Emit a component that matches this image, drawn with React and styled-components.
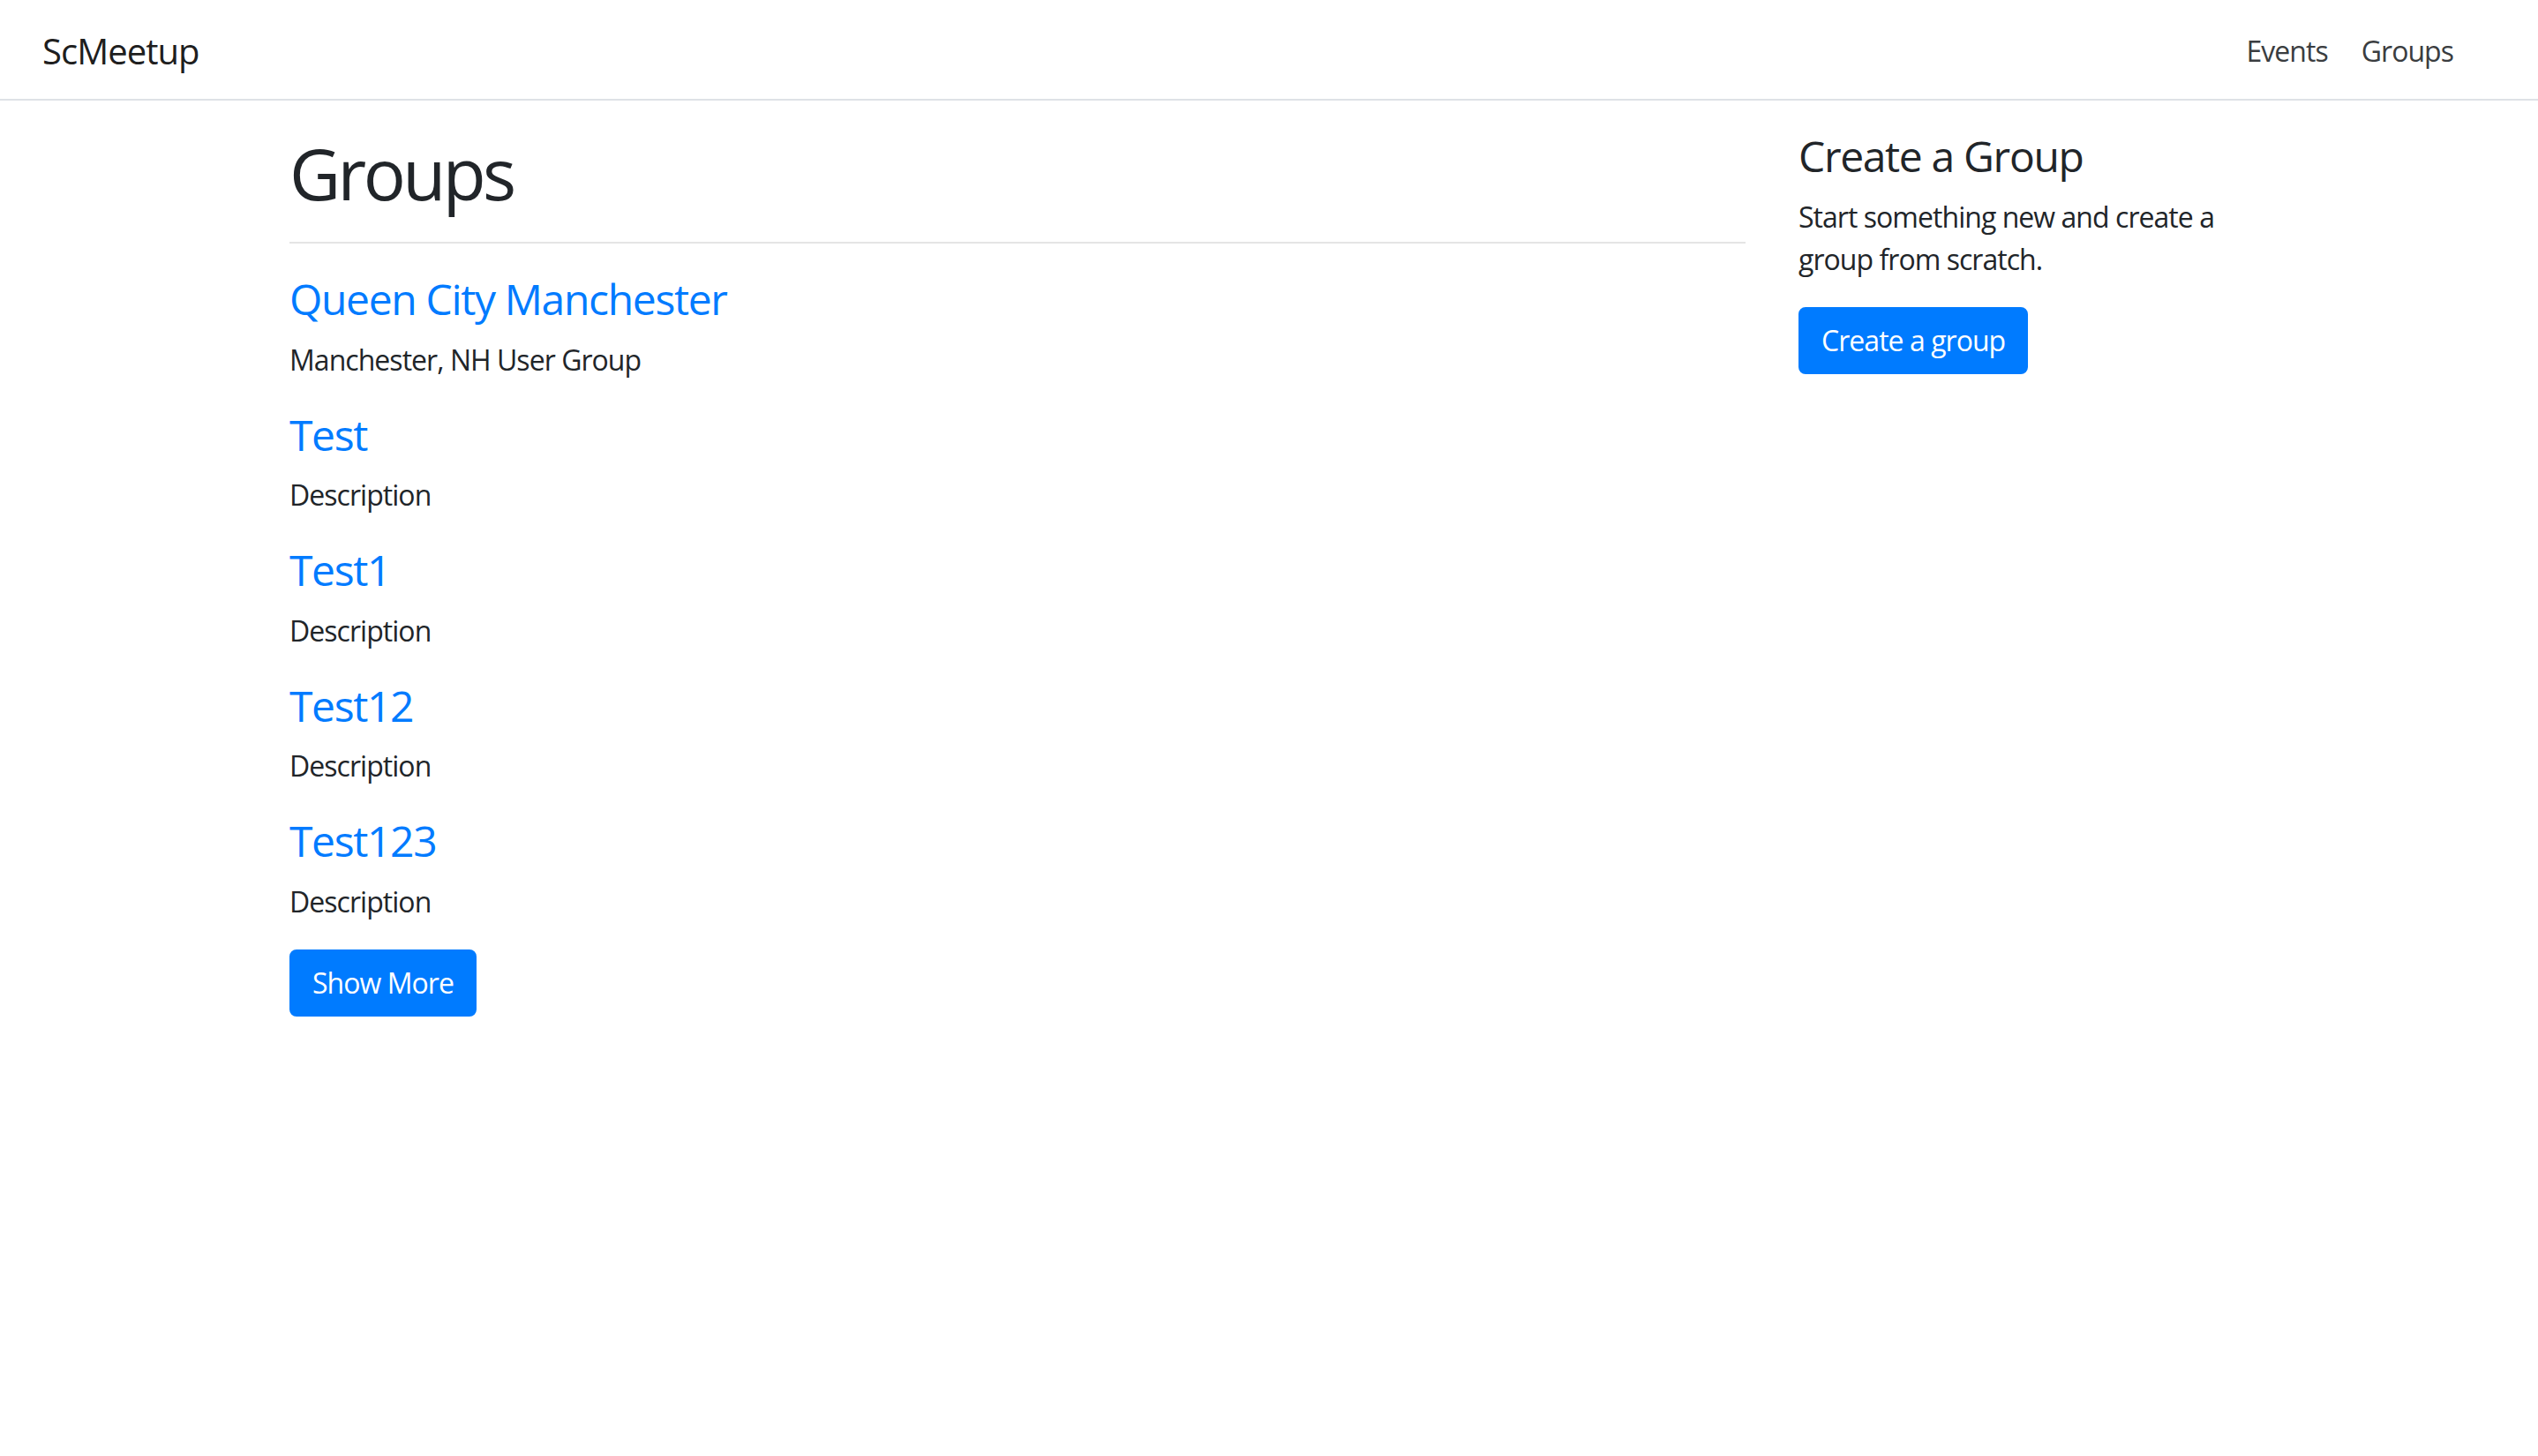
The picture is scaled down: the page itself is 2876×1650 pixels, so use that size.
import React from "react"
import styled, { createGlobalStyle } from "styled-components"

// the reference is a bootstrap 4 page photographed at 2x, so every value here is doubled

const GlobalStyle = createGlobalStyle`
    * { box-sizing: border-box; }
    body {
        margin: 0;
        font-family: "Open Sans", "Noto Sans", Arial, sans-serif;
        font-size: 32px;
        line-height: 1.5;
        letter-spacing: -0.03em;
        color: #212529;
        background: #fff;
    }
`

const Navbar = styled.nav`
    display: flex;
    align-items: center;
    justify-content: space-between;
    padding: 18px 80px 14px 48px;
    border-bottom: 2px solid #dee2e6;
`

const Brand = styled.a`
    font-size: 40px;
    line-height: 60px;
    padding: 10px 0;
    color: rgba(0, 0, 0, 0.9);
    text-decoration: none;
`

const NavList = styled.div`
    display: flex;
    gap: 6px;
`

const NavLink = styled.a`
    padding: 16px 16px;
    line-height: 48px;
    color: #3a3d40;
    text-decoration: none;
`

const Container = styled.div`
    max-width: 2280px;
    margin: 32px auto 0;
    padding: 0 30px;
`

const Row = styled.div`
    display: flex;
    margin: 0 -30px;
`

const Col = styled.div`
    flex: 0 0 ${props => props.span / 12 * 100}%;
    max-width: ${props => props.span / 12 * 100}%;
    padding: 0 30px;
`

const PageTitle = styled.h1`
    margin: 0 0 16px;
    padding-top: 2px;
    font-size: 80px;
    line-height: 1.2;
    font-weight: 400;
    letter-spacing: -0.045em;
`

const Divider = styled.hr`
    margin: 30px 0 32px;
    border: 0;
    border-top: 2px solid rgba(0, 0, 0, 0.1);
`

const Heading = styled.h4`
    margin: 0 0 14px;
    padding-top: 2px;
    font-size: 48px;
    line-height: 1.2;
    font-weight: 400;
    letter-spacing: -0.028em;
    color: ${props => props.link ? "#007bff" : "#212529"};
`

const HeadingLink = styled.a`
    color: inherit;
    text-decoration: none;
`

const Text = styled.p`
    margin: 0 0 30px;
    padding-top: 2px;
`

const Button = styled.button`
    display: inline-block;
    font-family: inherit;
    font-size: 32px;
    line-height: 48px;
    letter-spacing: -0.03em;
    padding: 12px 24px;
    color: #fff;
    background: #007bff;
    border: 2px solid #007bff;
    border-radius: 8px;
    cursor: pointer;
`

const groups = [
    { name: "Queen City Manchester", description: "Manchester, NH User Group" },
    { name: "Test", description: "Description" },
    { name: "Test1", description: "Description" },
    { name: "Test12", description: "Description" },
    { name: "Test123", description: "Description" },
]

const GroupItem = ({ name, description }) => (
    <div>
        <Heading link><HeadingLink href="#">{name}</HeadingLink></Heading>
        <Text>{description}</Text>
    </div>
)

const App = () => {
    return (
        <>
            <GlobalStyle />
            <Navbar>
                <Brand href="#">ScMeetup</Brand>
                <NavList>
                    <NavLink href="#">Events</NavLink>
                    <NavLink href="#">Groups</NavLink>
                </NavList>
            </Navbar>
            <Container>
                <Row>
                    <Col span={9}>
                        <PageTitle>Groups</PageTitle>
                        <Divider />
                        {groups.map((group, index) => (
                            <GroupItem key={index} {...group} />
                        ))}
                        <Button>Show More</Button>
                    </Col>
                    <Col span={3}>
                        <Heading>Create a Group</Heading>
                        <Text>Start something new and create a group from scratch.</Text>
                        <Button>Create a group</Button>
                    </Col>
                </Row>
            </Container>
        </>
    )
}

export default App
